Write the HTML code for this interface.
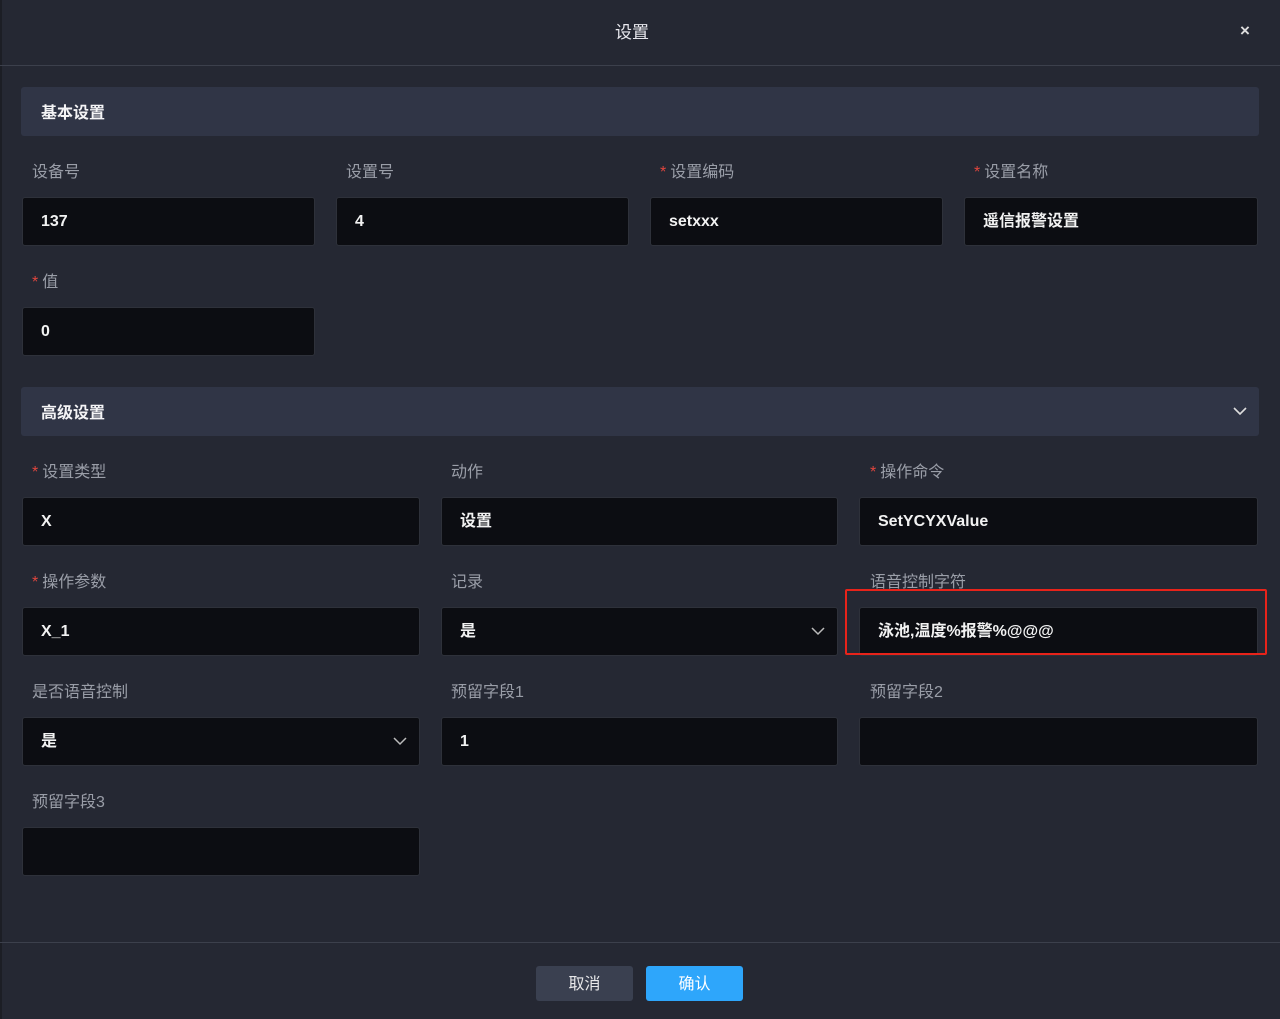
<!DOCTYPE html>
<html><head><meta charset="utf-8"><style>
*{margin:0;padding:0;box-sizing:border-box}
body{width:1280px;height:1019px;background:#252833;font-family:"Liberation Sans","Noto Sans CJK SC",sans-serif;position:relative;overflow:hidden;color:#fff}
.a{position:absolute}
.title{left:0;width:1264px;top:21px;text-align:center;font-size:17px;color:#e8e8ee;line-height:24px}
.close{left:1240px;top:21px;font-size:17px;color:#ddd;font-weight:bold;line-height:20px}
.hr{left:0;width:1280px;height:1px;background:#3c404c}
.sec{left:21px;width:1238px;height:49px;background:#303546;border-radius:3px;font-size:16px;font-weight:bold;padding-left:20px;padding-bottom:2px;color:#f4f4f6;display:flex;align-items:center}
.lbl{font-size:16px;color:#9a9ea8;line-height:20px}
.lbl b{color:#e0463e;font-weight:normal;margin-right:4px}
.in{height:49px;background:#0c0d12;border:1px solid #2e313a;border-radius:3px;font-size:16px;padding-left:18px;color:#f2f2f2;display:flex;align-items:center;font-weight:bold;line-height:20px}
.chev{position:absolute;right:12px;top:19px}
.btn{top:966px;width:97px;height:35px;border-radius:3px;font-size:16px;display:flex;align-items:center;justify-content:center;line-height:20px;padding-top:3px}
</style></head><body>
<div class="a" style="left:0;top:0;width:2px;height:1019px;background:#1c1e25"></div>
<div class="a title">设置</div>
<div class="a close">×</div>
<div class="a hr" style="top:65px"></div>

<div class="a sec" style="top:87px">基本设置</div>
<div class="a lbl" style="left:32px;top:163px">设备号</div>
<div class="a lbl" style="left:346px;top:163px">设置号</div>
<div class="a lbl" style="left:660px;top:163px"><b>*</b>设置编码</div>
<div class="a lbl" style="left:974px;top:163px"><b>*</b>设置名称</div>
<div class="a in" style="left:22px;top:197px;width:293px">137</div>
<div class="a in" style="left:336px;top:197px;width:293px">4</div>
<div class="a in" style="left:650px;top:197px;width:293px">setxxx</div>
<div class="a in" style="left:964px;top:197px;width:294px">遥信报警设置</div>
<div class="a lbl" style="left:32px;top:273px"><b>*</b>值</div>
<div class="a in" style="left:22px;top:307px;width:293px">0</div>

<div class="a sec" style="top:387px">高级设置<svg class="chev" style="top:20px;right:12px" width="14" height="9" viewBox="0 0 14 9"><path d="M1 1l6 6 6-6" fill="none" stroke="#ddd" stroke-width="1.6"/></svg></div>

<div class="a lbl" style="left:32px;top:463px"><b>*</b>设置类型</div>
<div class="a lbl" style="left:451px;top:463px">动作</div>
<div class="a lbl" style="left:870px;top:463px"><b>*</b>操作命令</div>
<div class="a in" style="left:22px;top:497px;width:398px">X</div>
<div class="a in" style="left:441px;top:497px;width:397px">设置</div>
<div class="a in" style="left:859px;top:497px;width:399px">SetYCYXValue</div>

<div class="a lbl" style="left:32px;top:573px"><b>*</b>操作参数</div>
<div class="a lbl" style="left:451px;top:573px">记录</div>
<div class="a lbl" style="left:870px;top:573px">语音控制字符</div>
<div class="a in" style="left:22px;top:607px;width:398px">X_1</div>
<div class="a in" style="left:441px;top:607px;width:397px">是<svg class="chev" width="14" height="9" viewBox="0 0 14 9"><path d="M1 1l6 6 6-6" fill="none" stroke="#bbb" stroke-width="1.5"/></svg></div>
<div class="a in" style="left:859px;top:607px;width:399px">泳池,温度%报警%@@@</div>
<div class="a" style="left:845px;top:589px;width:422px;height:66px;border:2px solid #e8231a;border-radius:2px"></div>

<div class="a lbl" style="left:32px;top:683px">是否语音控制</div>
<div class="a lbl" style="left:451px;top:683px">预留字段1</div>
<div class="a lbl" style="left:870px;top:683px">预留字段2</div>
<div class="a in" style="left:22px;top:717px;width:398px">是<svg class="chev" width="14" height="9" viewBox="0 0 14 9"><path d="M1 1l6 6 6-6" fill="none" stroke="#bbb" stroke-width="1.5"/></svg></div>
<div class="a in" style="left:441px;top:717px;width:397px">1</div>
<div class="a in" style="left:859px;top:717px;width:399px"></div>

<div class="a lbl" style="left:32px;top:793px">预留字段3</div>
<div class="a in" style="left:22px;top:827px;width:398px"></div>

<div class="a hr" style="top:942px"></div>
<div class="a btn" style="left:536px;background:#3a4050;color:#e8e8ea">取消</div>
<div class="a btn" style="left:646px;background:#2ea6fb;color:#fff">确认</div>
</body></html>
